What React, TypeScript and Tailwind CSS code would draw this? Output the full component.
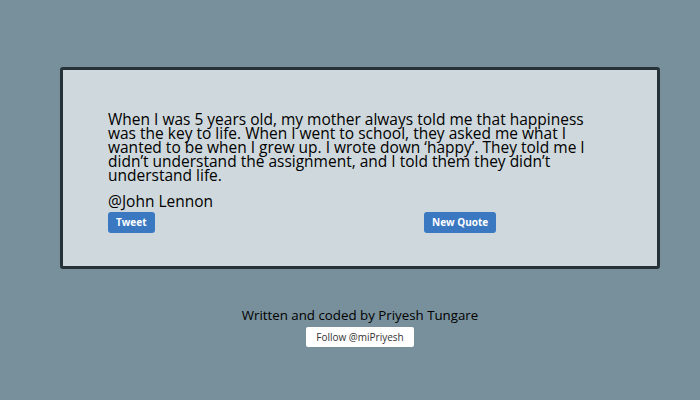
import React from "react";

const quote =
  "When I was 5 years old, my mother always told me that happiness was the key to life. When I went to school, they asked me what I wanted to be when I grew up. I wrote down \u2018happy\u2019. They told me I didn\u2019t understand the assignment, and I told them they didn\u2019t understand life.";

function QuoteCard() {
  return (
    <div className="ml-[60px] mt-[67px] h-[202px] w-[600px] rounded-[3px] border-[3px] border-[#263238] bg-[#cfd8dc] pl-[45px] pt-[42px]">
      <p className="w-[495px] text-[15.5px] leading-[14px] text-black">{quote}</p>
      <p className="mt-[10px] text-[15.5px] leading-[18px] text-black">@John Lennon</p>
      <div className="-mt-[2px] grid w-[632px] grid-cols-2">
        <div>
          <button className="h-[21px] rounded-[3px] bg-[#3a78c2] px-[8px] text-[10px] font-bold text-white">
            Tweet
          </button>
        </div>
        <div>
          <button className="h-[21px] rounded-[3px] bg-[#3a78c2] px-[8px] text-[10px] font-bold text-white">
            New Quote
          </button>
        </div>
      </div>
    </div>
  );
}

export default function App() {
  return (
    <div
      className="h-[400px] w-[700px] overflow-hidden bg-[#78909c]"
      style={{ fontFamily: '"Open Sans", sans-serif' }}
    >
      <QuoteCard />
      <div className="mt-[37px] flex flex-col items-center pl-[20px]">
        <p className="text-[13.3px] leading-[18px] text-black">Written and coded by Priyesh Tungare</p>
        <button className="mt-[3px] h-[20px] rounded-[2px] bg-white px-[10px] text-[10px] text-[#333]">
          Follow @miPriyesh
        </button>
      </div>
    </div>
  );
}
